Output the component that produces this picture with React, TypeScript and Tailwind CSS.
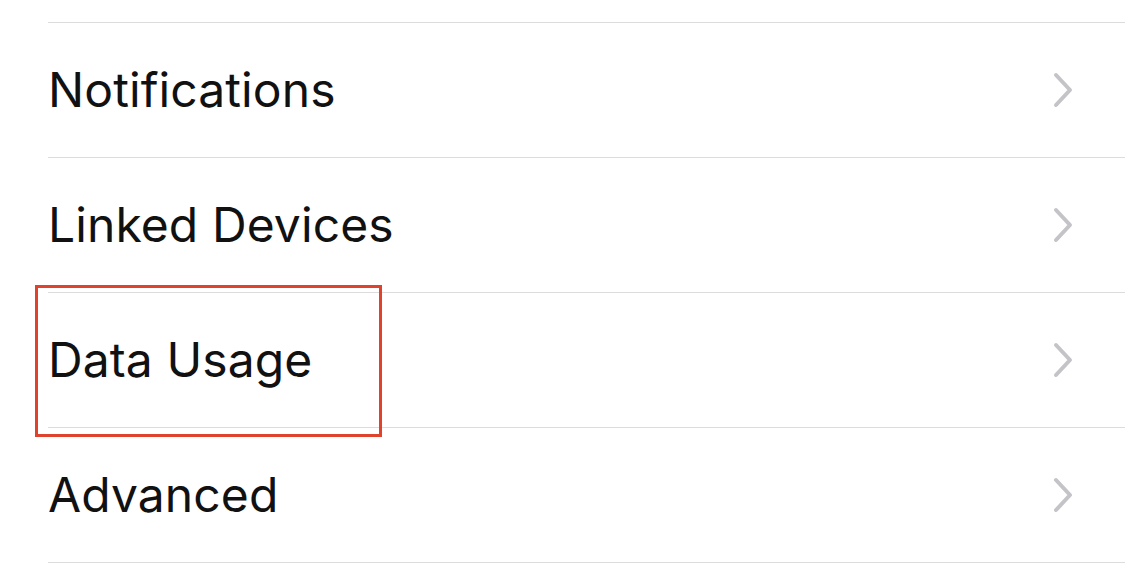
const items = ['Notifications', 'Linked Devices', 'Data Usage', 'Advanced'];

function Chevron() {
  return (
    <svg width="22" height="38" viewBox="0 0 22 38" fill="none" className="shrink-0">
      <path
        d="M4 4 L18 19 L4 34"
        stroke="#c4c4c8"
        strokeWidth="4"
        strokeLinecap="round"
        strokeLinejoin="round"
      />
    </svg>
  );
}

export default function App() {
  return (
    <div className="relative h-[576px] w-[1125px] overflow-hidden bg-white pt-[22px] font-['Inter',sans-serif]">
      <div className="ml-[48px] border-b border-[#dcdcdc]">
        {items.map((label) => (
          <div
            key={label}
            className="flex h-[135px] items-center justify-between border-t border-[#dcdcdc] pr-[51px]"
          >
            <span className="text-[48px] leading-none tracking-[0.1px] text-[#111111]">{label}</span>
            <Chevron />
          </div>
        ))}
      </div>
      {/* highlight box round "Data Usage" */}
      <div className="absolute left-[35px] top-[285px] h-[152px] w-[347px] border-[3px] border-[#e0432d]" />
    </div>
  );
}
